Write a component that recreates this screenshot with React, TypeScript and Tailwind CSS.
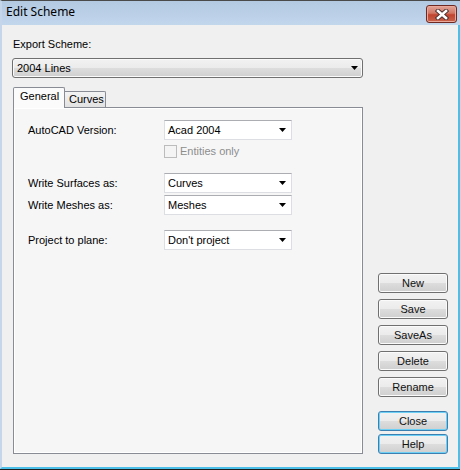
import React from "react";

const btnBg =
  "bg-[linear-gradient(to_bottom,#f2f2f2_0%,#ebebeb_50%,#dddddd_51%,#cfcfcf_100%)]";

const Arrow = () => (
  <svg width="7" height="4" viewBox="0 0 7 4" className="shrink-0">
    <polygon points="0,0 7,0 3.5,4" fill="#000" />
  </svg>
);

const Combo = ({ value }: { value: string }) => (
  <div className="flex items-center justify-between w-[128px] h-[20px] pl-[3px] pr-[5px] bg-white border border-[#dcdee4] border-t-[#abadb3]">
    <span className="leading-none">{value}</span>
    <Arrow />
  </div>
);

const Field = ({ label, value, className = "" }: { label: string; value: string; className?: string }) => (
  <div className={`flex items-center ${className}`}>
    <span className="w-[136px]">{label}</span>
    <Combo value={value} />
  </div>
);

const Button = ({ label, focused = false, className = "" }: { label: string; focused?: boolean; className?: string }) => (
  <button
    className={`w-[70px] h-[20px] rounded-[3px] border flex items-center justify-center leading-none font-normal text-[11px] text-[#111] ${btnBg} ${
      focused
        ? "border-[#3c7fb1] shadow-[inset_0_0_0_1px_#6fd0f5]"
        : "border-[#707070] shadow-[inset_0_0_0_1px_#fbfbfb]"
    } ${className}`}
  >
    {label}
  </button>
);

const TitleBar = () => (
  <div className="h-[25px] shrink-0 flex items-start justify-between border-t border-[#4a4a4a] border-l-2 border-l-[#c5d6ea] bg-[linear-gradient(to_bottom,#b3c9e2,#c2d6ec)]">
    <span className="pl-[4px] pt-[5px] text-[12px] leading-none font-['Noto_Sans',sans-serif] text-black">
      Edit Scheme
    </span>
    <div className="mt-[4px] mr-[3px] w-[31px] h-[18px] rounded-[3px] border border-[#6e2a22] flex items-center justify-center bg-[linear-gradient(to_bottom,#e1a497_0%,#d27765_45%,#c0442f_55%,#c9634c_100%)] shadow-[inset_0_0_0_1px_#eaa89a]">
      <svg width="14" height="11" viewBox="0 0 14 11">
        <path d="M3 2 L11 9 M11 2 L3 9" stroke="#4a3030" strokeWidth="4.4" strokeLinecap="square" />
        <path d="M3 2 L11 9 M11 2 L3 9" stroke="#ffffff" strokeWidth="2.6" strokeLinecap="square" />
      </svg>
    </div>
  </div>
);

export default function App() {
  return (
    <div className="w-[460px] h-[470px] flex flex-col overflow-hidden bg-[#f0f0f0] text-[11px] text-black font-['Liberation_Sans',Arial,sans-serif]">
      <TitleBar />
      <div className="flex-1 flex pl-[10px] pb-[13px] border-l-2 border-l-[#c5d6ea] border-r-2 border-r-[#4bbfe8] border-b-2 border-b-[#4bbfe8]">
        {/* left column */}
        <div className="w-[351px] flex flex-col pt-[12px]">
          <span className="pl-[1px] leading-[14px]">Export Scheme:</span>
          <div className={`mt-[7px] h-[20px] flex items-center justify-between pl-[4px] pr-[4px] rounded-[3px] border border-[#707070] ${btnBg} shadow-[inset_0_0_0_1px_#fafafa]`}>
            <span className="leading-none">2004 Lines</span>
            <Arrow />
          </div>

          {/* tabs */}
          <div className="mt-[9px] h-[20px] flex items-end pl-[1px]">
            <div className="relative z-10 w-[52px] h-[21px] -mb-px bg-[#fbfbfb] border border-b-0 border-[#898c95] rounded-t-[2px] pl-[6px] pt-[3px] leading-none">
              General
            </div>
            <div className="w-[41px] h-[16px] border border-l-0 border-b-0 border-[#898c95] rounded-tr-[2px] bg-[linear-gradient(to_bottom,#f3f3f3,#e2e2e2)] pl-[4px] pt-[2px] leading-none">
              Curves
            </div>
          </div>

          <div className="flex-1 ml-[1px] w-[350px] border border-[#898c95] bg-[#f6f6f7] shadow-[inset_0_0_0_1px_#ffffff] pt-[12px] pl-[14px]">
            <Field label="AutoCAD Version:" value="Acad 2004" />
            <div className="flex items-center mt-[5px] ml-[136px] text-[#8d8d8d]">
              <span className="w-[13px] h-[13px] border border-[#bcbcbc] bg-[#f4f4f4]" />
              <span className="ml-[3px] leading-none">Entities only</span>
            </div>
            <Field label="Write Surfaces as:" value="Curves" className="mt-[15px]" />
            <Field label="Write Meshes as:" value="Meshes" className="mt-[2px]" />
            <Field label="Project to plane:" value="Don't project" className="mt-[15px]" />
          </div>
        </div>

        {/* right column */}
        <div className="ml-[15px] flex flex-col justify-end gap-[6px]">
          <Button label="New" />
          <Button label="Save" />
          <Button label="SaveAs" />
          <Button label="Delete" />
          <Button label="Rename" />
          <Button label="Close" focused className="mt-[8px]" />
          <Button label="Help" focused className="-mt-[3px]" />
        </div>
      </div>
      <div className="h-px shrink-0 bg-[#1e1e1e]" />
    </div>
  );
}
